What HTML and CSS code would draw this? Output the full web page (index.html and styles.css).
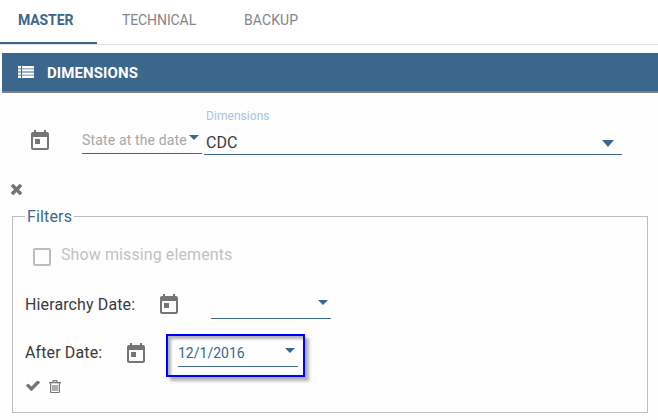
FILE: index.html
```html
<!DOCTYPE html>
<html lang="en">
<head>
<meta charset="utf-8">
<title>Dimensions</title>
<link rel="stylesheet" href="styles.css">
</head>
<body>
<svg width="0" height="0" class="defs">
  <symbol id="today" viewBox="0 0 24 24"><path d="M19 3h-1V1h-2v2H8V1H6v2H5c-1.1 0-2 .9-2 2v14c0 1.1.9 2 2 2h14c1.1 0 2-.9 2-2V5c0-1.1-.9-2-2-2zm0 16H5V8h14v11zM7 10h5v5H7z"/></symbol>
</svg>
<nav class="tabs">
  <a class="tab active"><span>MASTER</span></a>
  <a class="tab technical"><span>TECHNICAL</span></a>
  <a class="tab backup"><span>BACKUP</span></a>
</nav>
<header class="titlebar">
  <svg class="list" viewBox="0 0 16 12"><path d="M0 0h3v2.400H0zM4 0h12v2.400H4zM0 3.200h3v2.400H0zM4 3.200h12v2.400H4zM0 6.400h3v2.400H0zM4 6.400h12v2.400H4zM0 9.600h3v2.400H0zM4 9.600h12v2.400H4z"/></svg>
  <h1>DIMENSIONS</h1>
</header>
<section class="toolbar">
  <svg class="calendar"><use href="#today"/></svg>
  <div class="field state"><span>State at the date</span><i class="caret"></i></div>
  <div class="dimension">
    <label>Dimensions</label>
    <div class="select"><span>CDC</span><i class="caret large"></i></div>
  </div>
</section>
<svg class="close" viewBox="302 430 1188 1188"><path transform="translate(0 70)" d="M1490 1322q0 40-28 68l-136 136q-28 28-68 28t-68-28l-294-294-294 294q-28 28-68 28t-68-28l-136-136q-28-28-28-68t28-68l294-294-294-294q-28-28-28-68t28-68l136-136q28-28 68-28t68 28l294 294 294-294q28-28 68-28t68 28l136 136q28 28 28 68t-28 68l-294 294 294 294q28 28 28 68z" /></svg>
<fieldset class="filters">
  <legend>Filters</legend>
  <div class="missing"><i class="checkbox"></i><span>Show missing elements</span></div>
  <div class="row hierarchy">
    <span class="name">Hierarchy Date:</span>
    <svg class="calendar"><use href="#today"/></svg>
    <div class="field"><span></span><i class="caret"></i></div>
  </div>
  <div class="row after">
    <span class="name">After Date:</span>
    <svg class="calendar"><use href="#today"/></svg>
    <div class="highlight"><div class="field"><span>12/1/2016</span><i class="caret"></i></div></div>
  </div>
  <div class="actions">
    <svg class="check" viewBox="121 398 1550 1124"><path d="M1671 566q0 40-28 68l-724 724-136 136q-28 28-68 28t-68-28l-136-136-362-362q-28-28-28-68t28-68l136-136q28-28 68-28t68 28l294 295 656-657q28-28 68-28t68 28l136 136q28 28 28 68z"/></svg>
    <svg class="trash" viewBox="0 0 12 13"><path fill="none" stroke="currentColor" stroke-width="1.200" d="M0 2.700h12M3.700 2.500L4.300.6h3.400l.6 1.900M1.600 3v8.500q0 1 1 1h6.800q1 0 1-1V3M4 5v6M6 5v6M8 5v6"/></svg>
  </div>
</fieldset>
</body>
</html>
```

FILE: styles.css
```css
* { box-sizing: border-box; }
body { margin: 0; background: #fefefe; color: #3a3a3a; font-family: Roboto, sans-serif; font-size: 16px; overflow: hidden; }
svg { display: block; fill: currentColor; color: #757575; flex: none; }
.defs { position: absolute; }
.tabs { display: flex; height: 45px; border-bottom: 1px solid #e0e0e0; background: #fff; font-size: 14px; color: #858585; }
.tab { height: 44px; line-height: 40px; white-space: nowrap; }
.tab.active { width: 97px; padding-left: 18px; border-bottom: 2px solid #3b678c; color: #3b678c; font-weight: 700; letter-spacing: -.1px; }
.technical { width: 147px; padding-left: 25px; letter-spacing: -.1px; }
.backup { letter-spacing: .1px; }
.titlebar { display: flex; align-items: center; height: 40px; margin: 8px 0 0 2px; padding-left: 16px; background: #3b678c; border-bottom: 2px solid #808080; color: #fff; }
.titlebar h1 { margin: 0 0 0 13px; font-size: 15px; font-weight: 700; line-height: 38px; letter-spacing: .1px; padding-top: 1px; }
.list { width: 16px; height: 12px; color: #fff; }
.toolbar { display: flex; align-items: flex-start; height: 91px; padding-left: 28px; }
.calendar { width: 24px; height: 24px; }
.toolbar .calendar { margin-top: 36px; }
.field { display: flex; justify-content: space-between; width: 120px; height: 25px; border-bottom: 1px solid #3b678c; color: #3b678c; font-size: 14px; line-height: 20px; white-space: nowrap; }
.caret { width: 10px; height: 5px; margin: 6px 3px 0 0; background: #3b678c; clip-path: polygon(0 0, 100% 0, 50% 100%); flex: none; }
.state { margin: 36px 2px 0 30px; color: #a7a7a7; line-height: 23px; letter-spacing: .15px; }
.dimension { width: 418px; padding-top: 14px; }
.dimension label { display: block; height: 17px; padding: 1px 0 0 2px; color: #a8c4e0; font-size: 12px; line-height: 17px; letter-spacing: .05px; }
.select { display: flex; justify-content: space-between; height: 31px; padding-left: 2px; border-bottom: 1px solid #3b678c; line-height: 37px; }
.large { width: 12px; height: 7px; margin: 16px 8px 0 0; }
.close { width: 11px; height: 11px; margin-left: 11px; }
.filters { width: 636px; height: 206px; margin: 12px 0 0 12px; padding: 0 0 0 12px; border: 1px solid #bdbdbd; }
.filters legend { width: 49px; height: 18px; padding: 0 2px; color: #3b678c; line-height: 20px; white-space: nowrap; letter-spacing: .15px; }
.missing { display: flex; height: 50px; padding: 23px 0 0 8px; color: #c2c2c2; line-height: 14px; letter-spacing: .1px; }
.checkbox { width: 18px; height: 18px; margin: 0 10px 0 0; border: 2px solid #bdbdbd; border-radius: 2px; }
.row { display: flex; align-items: flex-start; height: 48px; line-height: 22px; }
.hierarchy { padding-top: 19px; height: 59px; }
.name { width: 132px; white-space: nowrap; letter-spacing: .12px; }
.row .calendar { margin-top: -1px; }
.hierarchy .field { margin-left: 30px; }
.after { height: 46px; }
.after .name { width: 99px; margin-top: 8px; }
.row.after .calendar { margin-top: 8px; }
.highlight { width: 139px; height: 43px; margin: 0 0 0 18px; padding: 8px 0 0 10px; border: 2px solid #00f; box-shadow: 4px 4px 3px rgba(0,0,0,.3), inset 3px 3px 3px rgba(0,0,0,.3); }
.after .field { height: 23px; line-height: 19px; }
.after .caret { margin-top: 4px; }
.actions { display: flex; }
.check { width: 14px; height: 10px; margin: 1px 9px 0 1px; }
.trash { width: 12px; height: 13px; }
```
